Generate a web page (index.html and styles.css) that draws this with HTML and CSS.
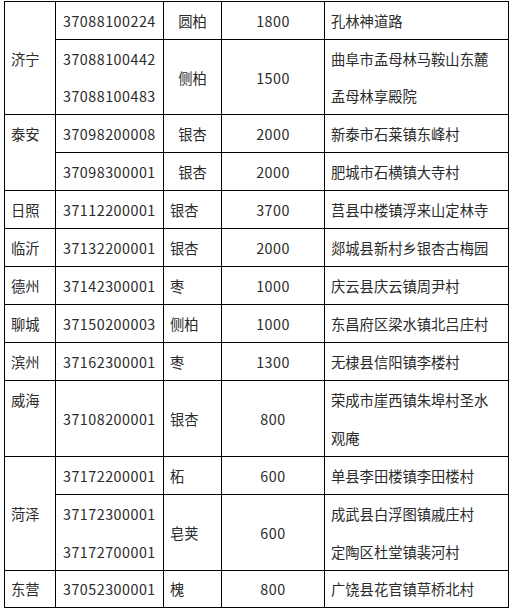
FILE: index.html
```html
<!DOCTYPE html>
<html lang="zh">
<head>
<meta charset="utf-8">
<link rel="stylesheet" href="styles.css">
</head>
<body>
<table class="trees">
  <colgroup>
    <col class="w-city"><col class="w-code"><col class="w-kind"><col class="w-age"><col class="w-place">
  </colgroup>
  <tr>
    <td rowspan="2" class="city mid">济宁</td>
    <td class="code">37088100224</td>
    <td class="kind ctr">圆柏</td>
    <td class="age">1800</td>
    <td class="place">孔林神道路</td>
  </tr>
  <tr>
    <td class="code">37088100442<br>37088100483</td>
    <td class="kind ctr">侧柏</td>
    <td class="age">1500</td>
    <td class="place">曲阜市孟母林马鞍山东麓<br>孟母林享殿院</td>
  </tr>
  <tr>
    <td rowspan="2" class="city top">泰安</td>
    <td class="code">37098200008</td>
    <td class="kind ctr">银杏</td>
    <td class="age">2000</td>
    <td class="place">新泰市石莱镇东峰村</td>
  </tr>
  <tr>
    <td class="code">37098300001</td>
    <td class="kind ctr">银杏</td>
    <td class="age">2000</td>
    <td class="place">肥城市石横镇大寺村</td>
  </tr>
  <tr>
    <td class="city">日照</td>
    <td class="code">37112200001</td>
    <td class="kind">银杏</td>
    <td class="age">3700</td>
    <td class="place">莒县中楼镇浮来山定林寺</td>
  </tr>
  <tr>
    <td class="city">临沂</td>
    <td class="code">37132200001</td>
    <td class="kind">银杏</td>
    <td class="age">2000</td>
    <td class="place">郯城县新村乡银杏古梅园</td>
  </tr>
  <tr>
    <td class="city">德州</td>
    <td class="code">37142300001</td>
    <td class="kind">枣</td>
    <td class="age">1000</td>
    <td class="place">庆云县庆云镇周尹村</td>
  </tr>
  <tr>
    <td class="city">聊城</td>
    <td class="code">37150200003</td>
    <td class="kind">侧柏</td>
    <td class="age">1000</td>
    <td class="place">东昌府区梁水镇北吕庄村</td>
  </tr>
  <tr>
    <td class="city">滨州</td>
    <td class="code">37162300001</td>
    <td class="kind">枣</td>
    <td class="age">1300</td>
    <td class="place">无棣县信阳镇李楼村</td>
  </tr>
  <tr class="tall">
    <td class="city top">威海</td>
    <td class="code">37108200001</td>
    <td class="kind">银杏</td>
    <td class="age">800</td>
    <td class="place">荣成市崖西镇朱埠村圣水<br>观庵</td>
  </tr>
  <tr>
    <td rowspan="2" class="city mid">菏泽</td>
    <td class="code">37172200001</td>
    <td class="kind">柘</td>
    <td class="age">600</td>
    <td class="place">单县李田楼镇李田楼村</td>
  </tr>
  <tr class="tall">
    <td class="code">37172300001<br>37172700001</td>
    <td class="kind">皂荚</td>
    <td class="age">600</td>
    <td class="place">成武县白浮图镇戚庄村<br>定陶区杜堂镇裴河村</td>
  </tr>
  <tr class="last">
    <td class="city">东营</td>
    <td class="code">37052300001</td>
    <td class="kind">槐</td>
    <td class="age">800</td>
    <td class="place">广饶县花官镇草桥北村</td>
  </tr>
</table>
</body>
</html>
```

FILE: styles.css
```css
html, body {
  background: #ffffff;
}
body {
  margin: 1px 0 0 4px;
  font-family: "Noto Sans CJK SC", "Noto Sans", sans-serif;
  font-size: 14.3px;
  color: #2b2b2b;
}
.trees {
  border-collapse: collapse;
  table-layout: fixed;
  width: 505px;
}
.w-city { width: 51px; }
.w-code { width: 108px; }
.w-kind { width: 58px; }
.w-age { width: 103px; }
.w-place { width: 184px; }
.trees td {
  border: 1px solid #000000;
  padding: 0 6px;
  line-height: 37px;
  vertical-align: middle;
  text-align: left;
  white-space: nowrap;
}
.trees tr.tall td.place,
.trees tr.tall td.code { line-height: 37.5px; }
.trees tr.last td { line-height: 36px; }
.trees td.city.top { vertical-align: top; }
.trees td.code { padding-left: 7px; letter-spacing: 0.5px; }
.trees td.ctr { text-align: center; }
.trees td.age { text-align: center; letter-spacing: 0.5px; }
```
